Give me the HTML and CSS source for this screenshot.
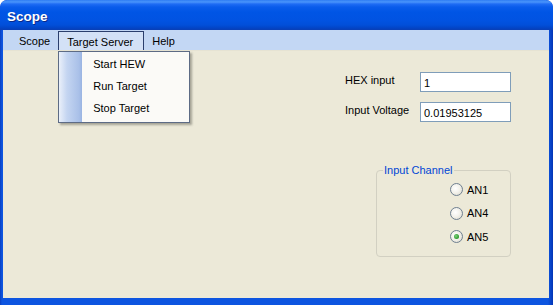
FILE: index.html
```html
<!DOCTYPE html>
<html>
<head>
<meta charset="utf-8">
<title>Scope</title>
<link rel="stylesheet" href="styles.css">
</head>
<body>
<div class="window">
  <div class="titlebar"><span class="title">Scope</span></div>
  <div class="frame">
    <nav class="menubar">
      <div class="menu-item">Scope</div>
      <div class="menu-item active">Target Server
        <div class="dropdown">
          <div class="dd-item">Start HEW</div>
          <div class="dd-item">Run Target</div>
          <div class="dd-item">Stop Target</div>
        </div>
      </div>
      <div class="menu-item">Help</div>
    </nav>
    <main class="client">
      <div class="form">
        <div class="row"><span class="label">HEX input</span><div class="textbox">1</div></div>
        <div class="row"><span class="label">Input Voltage</span><div class="textbox">0.01953125</div></div>
      </div>
      <fieldset class="group">
        <legend class="legend">Input Channel</legend>
        <div class="radios">
          <div class="radio"><span class="dot"></span><span>AN1</span></div>
          <div class="radio"><span class="dot"></span><span>AN4</span></div>
          <div class="radio"><span class="dot checked"></span><span>AN5</span></div>
        </div>
      </fieldset>
    </main>
  </div>
</div>
</body>
</html>
```

FILE: styles.css
```css
html, body {
  margin: 0;
  padding: 0;
  background: #ffffff;
}
body {
  font-family: "Liberation Sans", Arial, sans-serif;
  font-size: 11px;
  color: #000;
}
.window {
  width: 553px;
  height: 305px;
  display: flex;
  flex-direction: column;
  background: #0845d6;
  border-radius: 7px 7px 0 0;
  overflow: hidden;
  box-sizing: border-box;
}
.titlebar {
  height: 30px;
  flex: none;
  background: linear-gradient(to bottom, #2f7cf3 0px, #4a95fb 2px, #1f6cf4 4px, #0a5ceb 7px, #0055e5 12px, #0153e2 20px, #014fd9 25px, #0244c6 28px, #0a3fb4 30px);
  display: flex;
  align-items: center;
  padding-left: 7px;
  border-radius: 7px 7px 0 0;
}
.title {
  color: #fff;
  font-weight: bold;
  font-size: 13.5px;
  text-shadow: 1px 1px 0 #0a2a8a;
  margin-top: 3px;
}
.frame {
  flex: 1;
  display: flex;
  flex-direction: column;
  padding: 0 4px 7px 3px;
  background: linear-gradient(to right, #0a3fc0 0px, #0d55e0 2px, #0d55e0 548px, #0335b5 553px);
  min-height: 0;
}
.menubar {
  height: 20px;
  flex: none;
  background: #c3d7f4;
  display: flex;
  align-items: stretch;
  padding-left: 8px;
  position: relative;
  z-index: 2;
}
.menu-item {
  padding: 3px 8px 0 8px;
  display: flex;
  align-items: center;
  position: relative;
  line-height: 13px;
}
.menu-item.active {
  background: #d3e1f6;
  border: 1px solid #2b3f6d;
  border-bottom: none;
  padding: 2px 0 0 8px;
  width: 86px;
  box-sizing: border-box;
  margin-top: 1px;
}
.dropdown {
  position: absolute;
  left: -1px;
  top: 19px;
  width: 132px;
  box-sizing: border-box;
  border: 1px solid #5d6b85;
  padding: 1px 0 3px 0;
  background: linear-gradient(to right, #eaf0fa 0px, #c4d5f1 8px, #a9c0e8 20px, #9ab4e2 23px, #fbfaf7 23px);
  box-shadow: 2px 2px 2px rgba(80, 80, 70, 0.45);
}
.dd-item {
  height: 22px;
  line-height: 22px;
  padding-left: 34px;
}
.client {
  flex: 1;
  background: #ece9d8;
  display: flex;
  flex-direction: column;
  padding-top: 21px;
  padding-left: 342px;
  border-top: 1px solid #e6e3d3;
  box-sizing: border-box;
}
.form {
  display: flex;
  flex-direction: column;
  gap: 10px;
}
.row {
  display: flex;
  align-items: center;
  height: 20px;
}
.label {
  width: 75px;
  margin-top: -5px;
}
.textbox {
  width: 91px;
  height: 20px;
  box-sizing: border-box;
  border: 1px solid #7f9db9;
  background: #fff;
  padding-left: 3px;
  line-height: 18px;
  padding-top: 1px;
}
.group {
  margin: 42px 0 0 31px;
  width: 135px;
  height: 93px;
  box-sizing: border-box;
  border: 1px solid #d2d0c2;
  border-radius: 4px;
  padding: 0;
  min-width: 0;
}
.legend {
  color: #0046d5;
  padding: 0 1px;
  margin-left: 6px;
  line-height: 13px;
  white-space: nowrap;
}
.radios {
  display: flex;
  flex-direction: column;
  margin-top: 1px;
  padding-left: 73px;
}
.radio {
  height: 23.5px;
  display: flex;
  align-items: center;
  gap: 4px;
}
.dot {
  width: 13px;
  height: 13px;
  box-sizing: border-box;
  border-radius: 50%;
  border: 1px solid #6f8091;
  background: radial-gradient(circle at 40% 40%, #ffffff 0%, #f3f2ec 45%, #d9d6c8 100%);
  display: flex;
  align-items: center;
  justify-content: center;
}
.dot.checked::after {
  content: "";
  width: 5px;
  height: 5px;
  border-radius: 50%;
  background: radial-gradient(circle at 40% 40%, #7fd17f 0%, #2a9a2a 70%, #1f801f 100%);
}
```
